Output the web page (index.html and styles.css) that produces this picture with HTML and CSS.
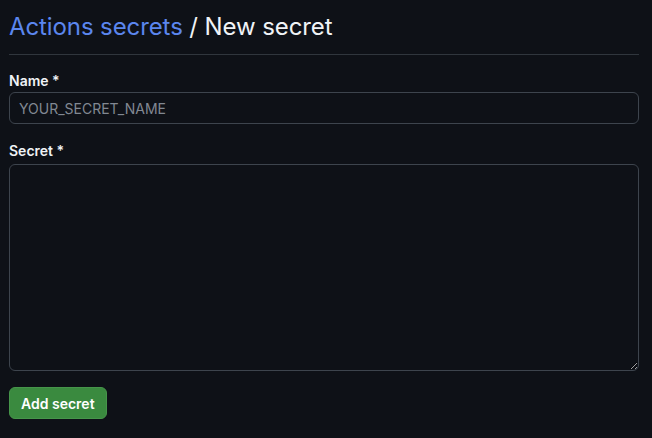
FILE: index.html
```html
<!DOCTYPE html>
<html>
<head>
<meta charset="utf-8">
<link rel="stylesheet" href="styles.css">
</head>
<body>
<div class="page">
  <div class="header">
    <h1 class="title"><a class="crumb" href="#">Actions secrets</a> / New secret</h1>
  </div>
  <form class="form">
    <div class="field">
      <label class="label" for="name">Name *</label>
      <input class="input" id="name" type="text" placeholder="YOUR_SECRET_NAME">
    </div>
    <div class="field">
      <label class="label" for="secret">Secret *</label>
      <textarea class="textarea" id="secret"></textarea>
    </div>
    <button class="btn" type="button">Add secret</button>
  </form>
</div>
</body>
</html>
```

FILE: styles.css
```css
html, body {
  margin: 0;
  padding: 0;
  background: #0e1117;
}
body {
  font-family: Inter, "Liberation Sans", Arial, sans-serif;
  color: #e6edf3;
}
.page {
  padding: 9px 13px 0 9px;
}
.header {
  border-bottom: 1px solid #30363d;
  padding-bottom: 9px;
}
.title {
  margin: 0;
  font-size: 24px;
  font-weight: 400;
  line-height: 36px;
  letter-spacing: -0.1px;
  color: #f0f3f6;
}
.crumb {
  color: #5b86ee;
  text-decoration: none;
}
.form {
  margin-top: 15px;
  display: flex;
  flex-direction: column;
}
.field {
  display: flex;
  flex-direction: column;
  margin-bottom: 16px;
}
.label {
  font-size: 14px;
  font-weight: 600;
  line-height: 21px;
  color: #f0f3f6;
  margin-bottom: 1px;
}
.input, .textarea {
  box-sizing: border-box;
  width: 100%;
  background: #0e1117;
  border: 1px solid #3d444d;
  border-radius: 6px;
  color: #e6edf3;
  font-family: Inter, "Liberation Sans", Arial, sans-serif;
  font-size: 14px;
  padding: 5px 9px;
  outline: none;
}
.input {
  height: 32px;
}
.input::placeholder {
  color: #818892;
}
.textarea {
  height: 207px;
  margin-top: 2px;
  resize: vertical;
}
.btn {
  align-self: flex-start;
  height: 32px;
  padding: 0 11px;
  background: #3a8a3f;
  border: 1px solid #46954a;
  border-radius: 6px;
  color: #ffffff;
  font-family: Inter, "Liberation Sans", Arial, sans-serif;
  font-size: 14px;
  font-weight: 600;
  white-space: nowrap;
}
```
